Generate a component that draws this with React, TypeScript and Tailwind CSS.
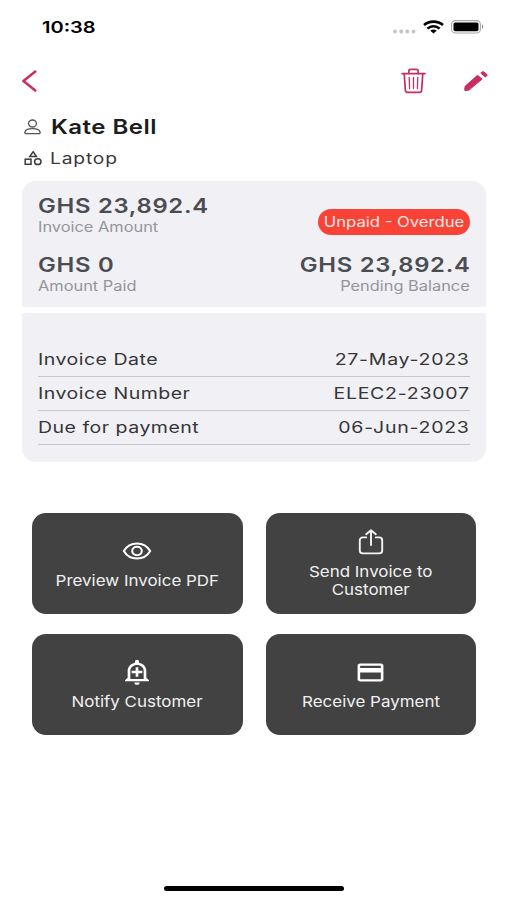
import type { ReactNode } from "react";
import { MdOutlineAddAlert, MdOutlinePayment } from "react-icons/md";

const details = [
  { label: "Invoice Date", value: "27-May-2023" },
  { label: "Invoice Number", value: "ELEC2-23007" },
  { label: "Due for payment", value: "06-Jun-2023" },
];

const StatusBar = () => (
  <div className="flex h-[54px] items-center justify-between pl-[42px] pr-[23px]">
    <span className="origin-left scale-x-[1.25] text-[16px] font-semibold text-black">10:38</span>
    <div className="flex items-center">
      <svg width="23" height="14" viewBox="0 0 23 14" fill="#c4c4c6">
        <circle cx="2" cy="11.5" r="1.9" />
        <circle cx="8.2" cy="11.5" r="1.9" />
        <circle cx="14.3" cy="11.5" r="1.9" />
        <circle cx="20.5" cy="11.5" r="1.9" />
      </svg>
      <svg className="ml-[7px]" width="21" height="14" viewBox="0 0 21 14" fill="none" stroke="#000" strokeWidth="2.6">
        <path d="M1 5C6.3.5 14.7.5 20 5" />
        <path d="M4.4 8.6c3.5-3.1 8.7-3.1 12.2 0" />
        <path d="M7.3 10.7c1.8-1.5 4.6-1.5 6.4 0l-3.200 2.900z" fill="#000" stroke="none" />
      </svg>
      <svg className="ml-[7px]" width="33" height="14" viewBox="0 0 33 14">
        <rect x=".6" y=".6" width="28.8" height="12.4" rx="3.8" fill="none" stroke="#a8a8a8" strokeWidth="1.1" />
        <rect x="2.5" y="2.4" width="25" height="8.8" rx="1.6" />
        <path d="M31 4.6c1.6.6 1.6 3.8 0 4.4z" fill="#888" />
      </svg>
    </div>
  </div>
);

const TrashIcon = () => (
  <svg width="25" height="26" viewBox="0 0 25 26" fill="none" stroke="#c92d63" strokeWidth="1.7" strokeLinecap="round" strokeLinejoin="round">
    <path d="M1 5.6h23M3.2 5.6l1.200 16.800c.1 1.300.8 2 2.200 2h11.800c1.400 0 2.100-.7 2.200-2l1.200-16.800" />
    <path d="M7.800 5.400V3.200c0-1.200.7-1.900 2-1.900h5.400c1.300 0 2 .7 2 1.900v2.200" />
    <path d="M8.200 9.500l.4 11M12.500 9.500v11M16.800 9.500l-.4 11" strokeWidth="1.300" />
  </svg>
);

const PencilIcon = () => (
  <svg className="ml-[38px]" width="24" height="21" viewBox="0 0 24 21" fill="#c92d63" stroke="#c92d63" strokeLinejoin="round">
    <path d="M13.500 4.300l4.600 3.800L5 19l-4 .6-.3-.4.4-3.900z" />
    <path d="M16.800 2.100L18.300.9c.5-.4 1-.4 1.500 0l3.100 2.500c.5.4.5.9 0 1.300l-1.500 1.200z" />
  </svg>
);

const PersonIcon = () => (
  <svg width="17" height="16" viewBox="0 0 17 16" fill="none" stroke="#555" strokeWidth="1.300">
    <ellipse cx="8.500" cy="4.500" rx="3.900" ry="3.500" />
    <path d="M.8 13.300c.5-2.500 4-3.600 7.700-3.600s7.200 1.100 7.700 3.600c.1.800-.4 1.300-1.300 1.300H2.100c-.9 0-1.400-.5-1.300-1.300z" />
  </svg>
);

const CategoryIcon = () => (
  <svg width="18" height="16" viewBox="0 0 18 16" fill="none" stroke="#3c3c3c" strokeWidth="1.500">
    <path d="M9.100 1.800l3.300 4.600H5.800z" />
    <rect x="1.200" y="9.200" width="5.800" height="5.100" />
    <ellipse cx="13.800" cy="11.700" rx="3.200" ry="2.900" />
  </svg>
);

const EyeIcon = () => (
  <svg width="30" height="18" viewBox="0 0 30 18" fill="none" stroke="#fff" strokeWidth="2.100">
    <path d="M1.800 9C4.800 4 9.500 1.500 15 1.500S25.200 4 28.200 9c-3 5-7.700 7.500-13.200 7.500S4.800 14 1.800 9z" strokeLinejoin="round" />
    <ellipse cx="15" cy="9" rx="4.800" ry="4.200" />
  </svg>
);

const SendIcon = () => (
  <svg width="26" height="26" viewBox="0 0 26 26" fill="none" stroke="#f4f4f4" strokeWidth="1.900" strokeLinecap="round" strokeLinejoin="round">
    <path d="M8.200 8.400H5c-1.900 0-3.200 1-3.200 2.800v10.300c0 1.900 1.300 2.900 3.200 2.900h16c1.900 0 3.200-1 3.200-2.900V11.200c0-1.800-1.300-2.800-3.200-2.800h-3.200" />
    <path d="M13 16V1.300M8.200 5.200L13 1.200l4.800 4" />
  </svg>
);

type AmountProps = {
  amount: string;
  label: string;
  right?: boolean;
};

const Amount = ({ amount, label, right }: AmountProps) => (
  <div className={right ? "flex flex-col items-end" : "flex flex-col items-start"}>
    <span
      className={`${right ? "origin-right" : "origin-left"} scale-x-[1.19] text-[20px] leading-[24px] font-semibold tracking-[0.6px] text-[#4b4d52]`}
    >
      {amount}
    </span>
    <span className={`${right ? "origin-right" : "origin-left"} -mt-px scale-x-[1.17] text-[14px] leading-[19px] text-[#95959a]`}>
      {label}
    </span>
  </div>
);

type ActionProps = {
  icon: ReactNode;
  children: ReactNode;
};

const Action = ({ icon, children }: ActionProps) => (
  <button className="flex h-[101px] flex-col items-center justify-center rounded-[14px] bg-[#424242] text-white">
    <span className="flex h-[28px] items-center">{icon}</span>
    <span className="mt-[7px] scale-x-[1.13] text-[15px] leading-[18px] text-[#f0f0f0]">{children}</span>
  </button>
);

const App = () => {
  return (
    <div className="flex h-[900px] w-[507px] flex-col overflow-hidden bg-white font-[Inter,'Liberation_Sans',sans-serif] whitespace-nowrap">
      <StatusBar />

      <header className="flex h-[54px] items-center justify-between pl-[22px] pr-[19px]">
        <svg width="15" height="22" viewBox="0 0 15 22" fill="none" stroke="#c92d63" strokeWidth="2.500" strokeLinecap="round" strokeLinejoin="round">
          <path d="M13.300 1.600L1.400 11l11.900 9.400" />
        </svg>
        <div className="flex items-center">
          <TrashIcon />
          <PencilIcon />
        </div>
      </header>

      <div className="flex h-[73px] flex-col pl-[24px]">
        <div className="flex h-[38px] items-center">
          <PersonIcon />
          <span className="ml-[10px] origin-left scale-x-[1.2] text-[20px] font-semibold tracking-[0.4px] text-[#1c1c1c]">Kate Bell</span>
        </div>
        <div className="flex h-[24px] items-center">
          <CategoryIcon />
          <span className="ml-[8px] origin-left scale-x-[1.2] text-[16px] tracking-[0.7px] text-[#3a3a3a]">Laptop</span>
        </div>
      </div>

      <main className="mr-[21px] ml-[22px] flex flex-col gap-[6px] text-[#363638]">
        <section className="flex h-[126px] justify-between rounded-t-[14px] bg-[#f0f0f5] px-[16px] pt-[13px]">
          <div className="flex flex-col gap-[17px]">
            <Amount amount="GHS 23,892.4" label="Invoice Amount" />
            <Amount amount="GHS 0" label="Amount Paid" />
          </div>
          <div className="flex flex-col items-end pt-[15px]">
            <div className="mb-[18px] flex h-[26px] w-[152px] items-center justify-center rounded-full bg-[#f94336]">
              <span className="-mt-px scale-x-[1.19] text-[14px] text-[#ffe9e6]">Unpaid - Overdue</span>
            </div>
            <Amount amount="GHS 23,892.4" label="Pending Balance" right />
          </div>
        </section>

        <section className="h-[149px] rounded-b-[14px] bg-[#f0f0f5] px-[16px] pt-[30px]">
          {details.map((row) => (
            <div key={row.label} className="flex h-[34px] items-center justify-between border-b border-[#c9c9cd] pb-px text-[16px]">
              <span className="origin-left scale-x-[1.22] tracking-[0.4px]">{row.label}</span>
              <span className="origin-right scale-x-[1.22] tracking-[0.6px]">{row.value}</span>
            </div>
          ))}
        </section>
      </main>

      <div className="mt-[51px] ml-[32px] grid w-[444px] grid-cols-2 gap-x-[23px] gap-y-[20px]">
        <Action icon={<EyeIcon />}>Preview Invoice PDF</Action>
        <Action icon={<SendIcon />}>
          Send Invoice to
          <br />
          Customer
        </Action>
        <Action icon={<MdOutlineAddAlert className="h-[28px] w-[32px]" preserveAspectRatio="none" />}>Notify Customer</Action>
        <Action icon={<MdOutlinePayment className="h-[27px] w-[31px]" preserveAspectRatio="none" />}>Receive Payment</Action>
      </div>

      <div className="mx-auto mt-auto mb-[9px] h-[5px] w-[180px] rounded-full bg-black" />
    </div>
  );
};

export default App;
